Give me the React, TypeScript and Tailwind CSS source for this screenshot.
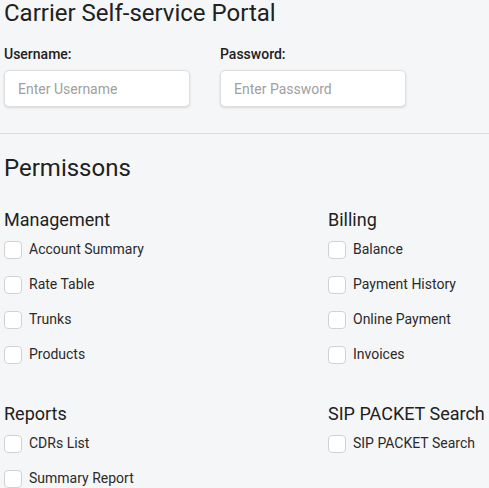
import { useState } from "react";

const groups = [
  {
    title: "Management",
    items: ["Account Summary", "Rate Table", "Trunks", "Products"],
  },
  {
    title: "Billing",
    items: ["Balance", "Payment History", "Online Payment", "Invoices"],
  },
  {
    title: "Reports",
    items: ["CDRs List", "Summary Report"],
  },
  {
    title: "SIP PACKET Search",
    items: ["SIP PACKET Search"],
  },
];

function Check({ label }: { label: string }) {
  const [on, setOn] = useState(false);
  return (
    <label className="flex items-center h-[35px] cursor-pointer">
      <input
        type="checkbox"
        checked={on}
        onChange={() => setOn(!on)}
        className="appearance-none w-[18px] h-[18px] rounded-[4px] border border-[#d2d2d2] bg-white"
      />
      <span className="ml-[7px] text-[14px] text-[#2a2a2a]">{label}</span>
    </label>
  );
}

export default function App() {
  return (
    <div
      className="min-h-screen bg-[#f5f6f8] text-[#212121]"
      style={{ fontFamily: "Roboto, 'Liberation Sans', sans-serif" }}
    >
      <div className="px-[4px]">
        <h1 className="text-[24px] leading-[27px]">Carrier Self-service Portal</h1>

        <div className="flex mt-[19px]">
          <div className="w-[216px]">
            <div className="text-[14px] font-medium leading-[17px]">Username:</div>
            <input
              placeholder="Enter Username"
              className="mt-[7px] w-[186px] h-[37px] px-[13px] rounded-[5px] border border-[#dedede] bg-white text-[14px] placeholder-[#a0a0a0] shadow-sm outline-none"
            />
          </div>
          <div className="w-[216px]">
            <div className="text-[14px] font-medium leading-[17px]">Password:</div>
            <input
              type="password"
              placeholder="Enter Password"
              className="mt-[7px] w-[186px] h-[37px] px-[13px] rounded-[5px] border border-[#dedede] bg-white text-[14px] placeholder-[#a0a0a0] shadow-sm outline-none"
            />
          </div>
        </div>
      </div>

      <hr className="mt-[26px] border-t border-[#dcdcdc]" />

      <div className="px-[4px]">
        <h2 className="mt-[20px] text-[24px] leading-[28px]">Permissons</h2>

        <div className="grid grid-cols-[324px_1fr] mt-[27px]">
          {groups.map((g, i) => (
            <div key={g.title} className={i >= 2 ? "mt-[31px]" : ""}>
              <h3 className="text-[18px] leading-[22px]">{g.title}</h3>
              <div className="mt-[1px]">
                {g.items.map((it) => (
                  <Check key={it} label={it} />
                ))}
              </div>
            </div>
          ))}
        </div>
      </div>
    </div>
  );
}
